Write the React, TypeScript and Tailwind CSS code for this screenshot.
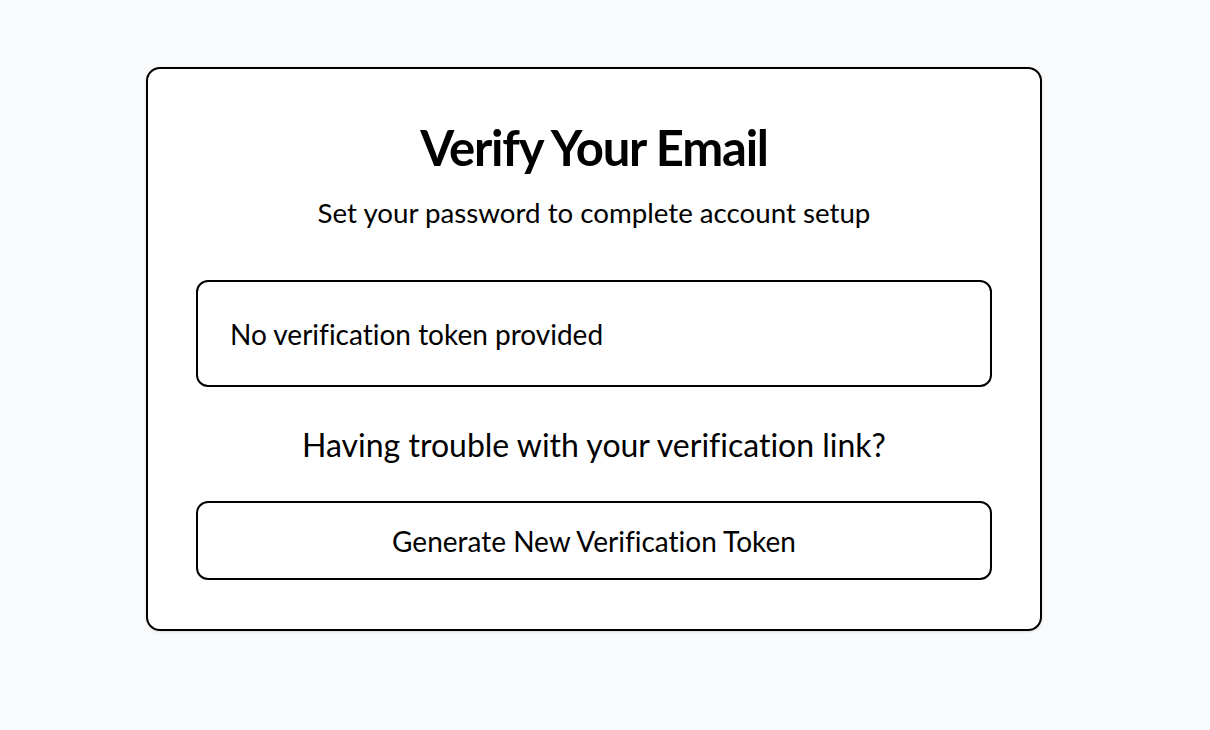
import React from 'react';

export default function App() {
  return (
    <div className="min-h-screen bg-[#f9fafb] pt-[67px] pl-[146px] [font-variant-ligatures:none]" style={{ fontFamily: 'Lato, "Noto Sans", sans-serif' }}>
      <div className="w-[896px] h-[564px] rounded-[14px] border-2 border-black bg-white px-[48px] pt-[48px] shadow-sm">
        <h1 className="text-center text-[49px] font-bold leading-[60px] tracking-tight text-black">Verify Your Email</h1>
        <p className="mt-[18px] text-center text-[27.7px] leading-[36px] text-black">Set your password to complete account setup</p>
        <div className="mt-[49px] flex h-[107px] items-center rounded-[12px] border-2 border-black px-[32px]">
          <span className="text-[28px] text-black [font-variant-ligatures:none]">No verification token provided</span>
        </div>
        <p className="mt-[38px] text-center text-[32px] leading-[40px] text-black [font-variant-ligatures:none]">Having trouble with your verification link?</p>
        <button className="mt-[36px] flex h-[79px] w-full items-center justify-center rounded-[12px] border-2 border-black text-[28px] text-black [font-variant-ligatures:none]">
          Generate New Verification Token
        </button>
      </div>
    </div>
  );
}
